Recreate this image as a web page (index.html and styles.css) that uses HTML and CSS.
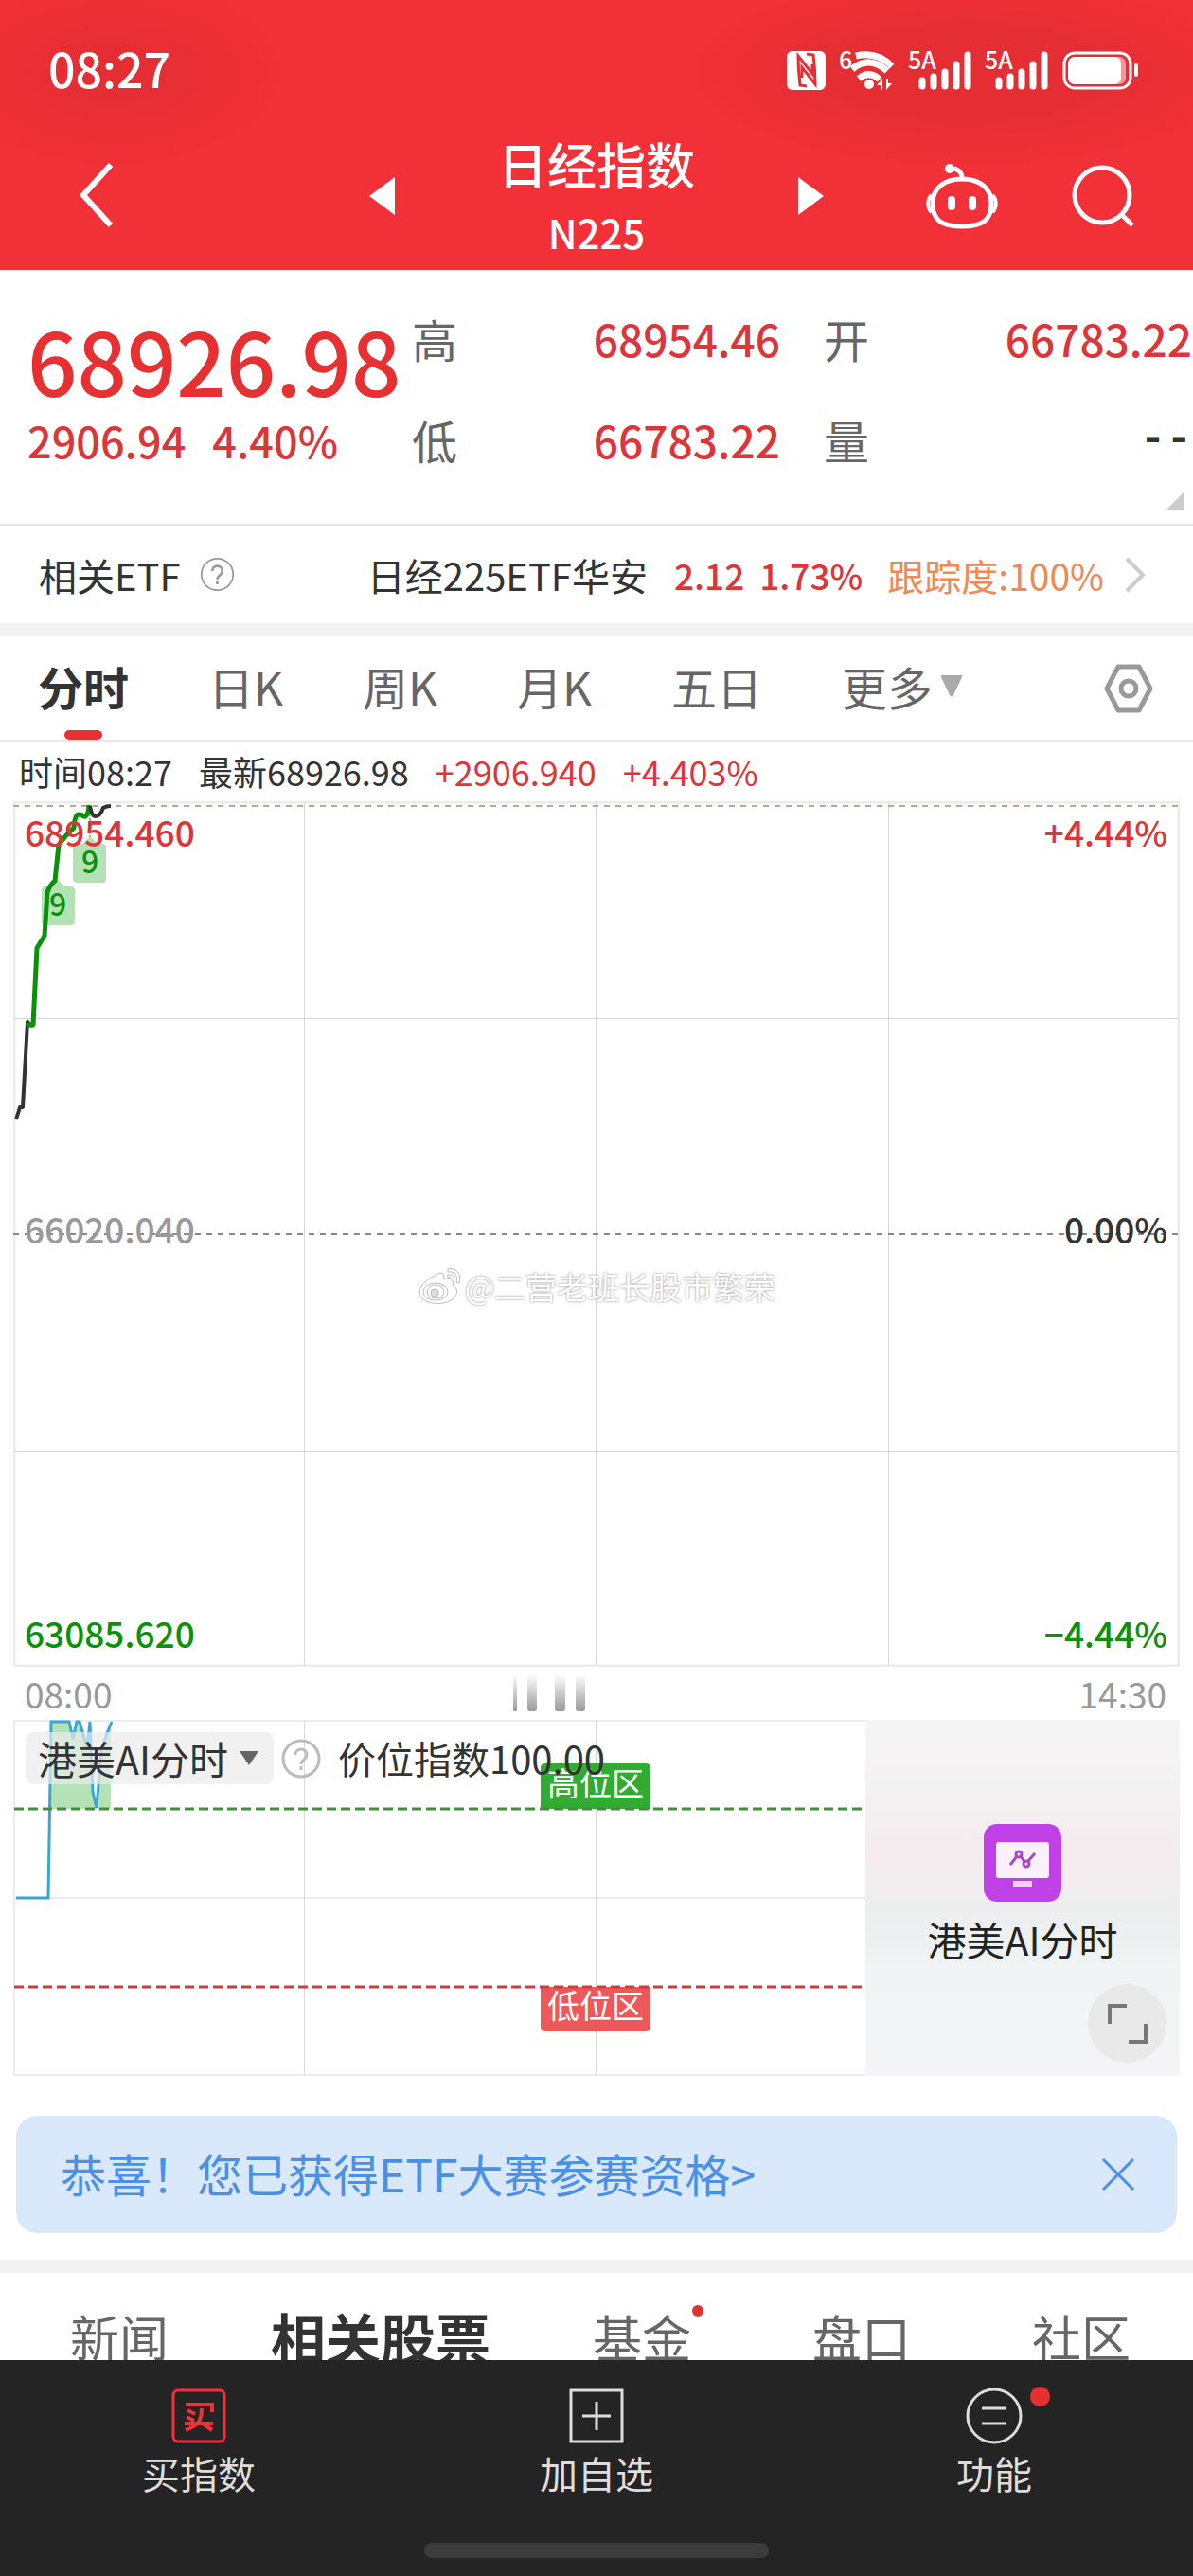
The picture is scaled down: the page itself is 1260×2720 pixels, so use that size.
FILE: index.html
```html
<!DOCTYPE html>
<html lang="zh-CN">
<head>
    <meta charset="UTF-8">
    <meta name="viewport" content="width=device-width, initial-scale=1.0">
    <title>日经指数 N225</title>
    <link rel="stylesheet" href="styles.css">
</head>
<body>
    <header class="header">
        <div class="status-bar">
            <span class="clock">08:27</span>
            <svg class="status-icons" width="372" height="42" viewBox="831 54 372 42" fill="#fff" aria-hidden="true">
                <!-- NFC -->
                <rect x="831" y="54" width="41" height="41" rx="6"/>
                <path d="M852 91l-7-1q-2-16-2-31l15 19V68M852 57l7 1q2 16 2 31l-14-18v11" fill="none" stroke="#e62e34" stroke-width="3"/>
                <!-- wifi -->
                <text x="886" y="73" class="status-text">6</text>
                <g fill="none" stroke="#fff" stroke-width="7">
                    <path d="M904 59q22-5 38 11"/>
                    <path d="M900 73q18-15 37 2"/>
                    <path d="M907 83q11-9 22 1"/>
                </g>
                <circle cx="918" cy="89" r="5"/>
                <path d="M926 90l6-7v12h-2v-5zM942 88l-6 7V83h2v5z"/>
                <!-- signal -->
                <text x="959" y="73" class="status-text">5A</text>
                <g stroke="#fff" stroke-width="7" stroke-linecap="round">
                    <path d="M974 85v6M986 81v10M998 76v15M1010 68v23M1022 58v33"/>
                    <path d="M1055 85v6M1067 81v10M1079 76v15M1091 68v23M1103 58v33"/>
                </g>
                <text x="1040" y="73" class="status-text">5A</text>
                <!-- battery -->
                <rect x="1124" y="56" width="70" height="37" rx="11" fill="none" stroke="#fff" stroke-width="3"/>
                <rect x="1129" y="60" width="60" height="29" rx="7" opacity=".5"/>
                <rect x="1128" y="60" width="56" height="29" rx="7"/>
                <rect x="1198" y="67" width="4" height="14" rx="2"/>
            </svg>
        </div>
        <div class="title-bar">
            <div class="title-left">
                <button class="icon-button" aria-label="返回">
                    <svg width="40" height="70" viewBox="0 0 40 70"><path d="M35 2L6 34l29 32" fill="none" stroke="#fff" stroke-width="6"/></svg>
                </button>
            </div>
            <div class="title-center">
                <button class="icon-button" aria-label="上一个">
                    <svg width="27" height="40" viewBox="0 0 27 40"><path d="M27 0v40L0 20z" fill="#fff"/></svg>
                </button>
                <div>
                    <h1>日经指数</h1>
                    <p class="code">N225</p>
                </div>
                <button class="icon-button" aria-label="下一个">
                    <svg width="27" height="40" viewBox="0 0 27 40"><path d="M0 0v40l27-20z" fill="#fff"/></svg>
                </button>
            </div>
            <div class="title-right">
                <button class="icon-button" aria-label="智能助手">
                    <svg width="76" height="70" viewBox="0 0 76 70" fill="none" stroke="#fff" stroke-width="5">
                        <path d="M38 17c17 0 31 8 31 26S59 67 38 67 7 61 7 43s14-26 31-26z"/>
                        <path d="M27 6c7 0 11 4 11 10"/>
                        <circle cx="25" cy="6" r="5" fill="#fff" stroke="none"/>
                        <path d="M6 34c-5 4-5 14 0 18M70 34c5 4 5 14 0 18" stroke-width="4"/>
                        <path d="M27 39v7M49 39v7" stroke-width="8" stroke-linecap="round"/>
                    </svg>
                </button>
                <button class="icon-button" aria-label="搜索">
                    <svg width="66" height="66" viewBox="0 0 66 66" fill="none" stroke="#fff" stroke-width="5">
                        <circle cx="32" cy="32" r="29"/>
                        <path d="M52 52l12 12"/>
                    </svg>
                </button>
            </div>
        </div>
    </header>

    <main>
        <section class="quote">
            <div class="quote-main">
                <div class="price">68926.98</div>
                <div class="change"><span>2906.94</span><span>4.40%</span></div>
            </div>
            <dl class="stats">
                <div><dt>高</dt><dd>68954.46</dd></div>
                <div><dt>低</dt><dd>66783.22</dd></div>
            </dl>
            <dl class="stats">
                <div><dt>开</dt><dd>66783.22</dd></div>
                <div><dt>量</dt><dd class="empty">--</dd></div>
            </dl>
            <svg class="corner" width="20" height="20" viewBox="0 0 20 20"><path d="M20 0v20H0z" fill="#ccc"/></svg>
        </section>

        <a class="etf-row" href="#etf">
            <span>相关ETF</span>
            <svg class="help" width="37" height="37" viewBox="0 0 42 42" fill="none" stroke="#999" stroke-width="2">
                <circle cx="21" cy="21" r="19"/>
                <path d="M15 17c0-8 12-8 12 0 0 5-6 5-6 10M21 29v4" stroke-width="3"/>
            </svg>
            <span class="etf-name">日经225ETF华安</span>
            <span class="etf-change red">2.12</span>
            <span class="etf-percent red">1.73%</span>
            <span class="tracking">跟踪度:100%</span>
            <svg class="chevron" width="22" height="38" viewBox="0 0 22 38"><path d="M2 2l17 17L2 36" fill="none" stroke="#ccc" stroke-width="4"/></svg>
        </a>

        <nav class="period-tabs">
            <button class="active">分时</button>
            <button>日K</button>
            <button>周K</button>
            <button>月K</button>
            <button>五日</button>
            <button class="more">更多<svg width="24" height="24" viewBox="0 0 24 24"><path d="M2 1h20q2 0 1 2l-9 19q-2 3-4 0L1 3q-1-2 1-2z" fill="#aaa"/></svg></button>
            <button class="settings" aria-label="设置">
                <svg width="52" height="52" viewBox="0 0 52 52" fill="none" stroke="#999" stroke-width="5" stroke-linejoin="round">
                    <path d="M15 3h22l12 23-12 23H15L3 26z"/>
                    <circle cx="26" cy="26" r="8"/>
                </svg>
            </button>
        </nav>

        <div class="info-row">
            <span>时间08:27</span>
            <span>最新68926.98</span>
            <span class="red">+2906.940</span>
            <span class="red">+4.403%</span>
        </div>

        <section class="chart">
            <svg viewBox="14 846 1232 914" fill="none">
                <path d="M15 847h1230v912H15z" stroke="#ececec" stroke-width="3"/>
                <path d="M321 847v912M629 847v912M938 847v912M15 1075h1230M15 1532h1230" stroke="#d8d8d8" shape-rendering="crispEdges"/>
                <path d="M14 851h1232" stroke="#b5ab86" stroke-width="2" stroke-dasharray="6 6"/>
                <path d="M14 1303h1232" stroke="#888" stroke-width="2" stroke-dasharray="6 6"/>
                <g fill="#b4e2b4">
                    <path d="M48 936h4l8-8 9 8h6q4 0 4 4v33q0 4-4 4H48q-4 0-4-4v-33q0-4 4-4z"/>
                    <path d="M81 891h6l8-8 8 8h5q4 0 4 4v33q0 4-4 4H81q-4 0-4-4v-33q0-4 4-4z"/>
                </g>
                <path d="M95 852v32" stroke="#0a910a" stroke-dasharray="4 2"/>
                <g stroke-width="4" stroke-linejoin="round">
                    <path d="M17 1182l4-13h3l5-90 3 3" stroke="#333"/>
                    <path d="M29 1080q1 3 6 2l4-81 8-13 3-46q3-8 8-12l4-38 8-10 8-8q1-14 5-14t5 2q5 2 6-12" stroke="#0a910a" stroke-width="5"/>
                    <path d="M95 851q2 11 5 11 6 0 9-9 3-2 8-2" stroke="#333"/>
                </g>
                <g class="marker-text">
                    <text x="61" y="967">9</text>
                    <text x="95" y="922">9</text>
                </g>
            </svg>
            <span class="axis-label top left red">68954.460</span>
            <span class="axis-label top right red">+4.44%</span>
            <span class="axis-label middle left gray">66020.040</span>
            <span class="axis-label middle right">0.00%</span>
            <span class="axis-label bottom left green">63085.620</span>
            <span class="axis-label bottom right green">−4.44%</span>
            <div class="watermark">
                <svg width="48" height="44" viewBox="0 0 48 44" fill="#fff" stroke="#bbb" stroke-width="1">
                    <path d="M18 11c6-5 12-3 9 4 8-3 13-1 10 6 6 3 6 9 1 14-9 9-36 7-36-7 0-6 8-13 16-17z"/>
                    <ellipse cx="19" cy="28" rx="13" ry="9"/>
                    <ellipse cx="19" cy="28" rx="9" ry="7"/>
                    <circle cx="18" cy="29" r="4" fill="#ddd"/>
                    <path d="M32 4c9-2 15 5 12 15l-3-1c2-8-2-12-9-11zM32 10c5-1 8 3 6 8l-2-1c1-3-1-5-4-4z"/>
                </svg>
                <span>@二营老班长股市繁荣</span>
            </div>
        </section>

        <div class="time-axis">
            <span>08:00</span>
            <svg class="bars" width="78" height="40" viewBox="0 0 78 40">
                <defs>
                    <linearGradient id="barFade" x1="0" y1="0" x2="0" y2="1">
                        <stop offset="0" stop-color="#fff"/>
                        <stop offset="1" stop-color="#999"/>
                    </linearGradient>
                </defs>
                <g fill="url(#barFade)">
                    <rect x="1" y="0" width="4" height="39" rx="1"/>
                    <rect x="16" y="0" width="10" height="39" rx="3"/>
                    <rect x="45" y="0" width="11" height="39" rx="3"/>
                    <rect x="67" y="0" width="10" height="39" rx="3"/>
                </g>
            </svg>
            <span class="end">14:30</span>
        </div>

        <section class="indicator">
            <div class="indicator-chart">
                <svg viewBox="14 1816 900 376" fill="none">
                    <path d="M914 1817H15v374h899M15 2004h899" stroke="#ececec" stroke-width="2"/>
                    <path d="M321 1817v374M629 1817v374" stroke="#d8d8d8" shape-rendering="crispEdges"/>
                    <path d="M53 1817h21l4 18 4-18h2l8 26 3-26 2 70 5 23H53zM104 1910l3-61 10-32v93z" fill="#b4e2b4"/>
                    <path d="M17 2004h34l3-186h19l4 18 4-18h3l8 27 3-27 3 74 4 17 5-61 6-18 5-12" stroke="#3ba5d8" stroke-width="3"/>
                    <path d="M571 1910v-43q0-5 5-5h106q5 0 5 5v43z" fill="#32ab32"/>
                    <path d="M571 2098v42q0 5 5 5h106q5 0 5-5v-42z" fill="#ef5858"/>
                    <path d="M15 1910h896" stroke="#3f9138" stroke-width="3" stroke-dasharray="10 5"/>
                    <path d="M15 2098h896" stroke="#d13a3e" stroke-width="3" stroke-dasharray="10 5"/>
                    <g class="zone-text">
                        <text x="629" y="1896">高位区</text>
                        <text x="629" y="2131">低位区</text>
                    </g>
                </svg>
                <div class="indicator-head">
                    <button class="indicator-select">港美AI分时<svg width="20" height="15" viewBox="0 0 20 15"><path d="M0 0h20L10 15z" fill="#666"/></svg></button>
                    <svg class="help" width="42" height="42" viewBox="0 0 42 42" fill="none" stroke="#bbb" stroke-width="3">
                        <circle cx="21" cy="21" r="19"/>
                        <path d="M15 17c0-8 12-8 12 0 0 5-6 5-6 10M21 29v4"/>
                    </svg>
                    <span>价位指数100.00</span>
                </div>
            </div>
            <aside class="indicator-panel">
                <svg width="82" height="82" viewBox="0 0 82 82">
                    <rect width="82" height="82" rx="14" fill="#bf41e7"/>
                    <rect x="13" y="19" width="56" height="38" rx="3" fill="#fbf0fd"/>
                    <rect x="31" y="60" width="20" height="6" fill="#f5cffc"/>
                    <g fill="none" stroke="#a948c4" stroke-width="3">
                        <path d="M28 43l7-9M39 34l4 6M47 39l7-8"/>
                        <circle cx="37" cy="32" r="3"/>
                        <circle cx="45" cy="42" r="3"/>
                    </g>
                </svg>
                <span>港美AI分时</span>
                <button class="expand" aria-label="展开">
                    <svg width="44" height="44" viewBox="0 0 44 44" fill="none" stroke="#777" stroke-width="4"><path d="M3 22V3h18M41 22v19H23"/></svg>
                </button>
            </aside>
        </section>

        <div class="banner">
            <a href="#contest">恭喜！您已获得ETF大赛参赛资格&gt;</a>
            <button class="icon-button" aria-label="关闭">
                <svg width="36" height="36" viewBox="0 0 36 36"><path d="M2 2l32 32M34 2L2 34" stroke="#4b90e2" stroke-width="3"/></svg>
            </button>
        </div>

        <nav class="content-tabs">
            <a href="#news">新闻</a>
            <a class="active" href="#stocks">相关股票</a>
            <a class="has-dot" href="#funds">基金</a>
            <a href="#book">盘口</a>
            <a href="#community">社区</a>
        </nav>
    </main>

    <footer class="bottom-bar">
        <nav>
            <button>
                <svg width="60" height="60" viewBox="0 0 60 60" fill="none" stroke="#f0303a" stroke-width="3">
                    <rect x="3" y="3" width="54" height="54" rx="5"/>
                    <path d="M16 18h28v8M18 24l8 4M17 31l8 4M15 38h30M33 22c0 14-4 18-17 23M34 38l10 7" stroke-width="4"/>
                </svg>
                买指数
            </button>
            <button>
                <svg width="60" height="60" viewBox="0 0 60 60" fill="none" stroke="#ddd" stroke-width="3">
                    <path d="M3 3h54v54H3zM30 15v30M15 30h30"/>
                </svg>
                加自选
            </button>
            <button>
                <span class="dot-icon">
                    <svg width="60" height="60" viewBox="0 0 60 60" fill="none" stroke="#ddd" stroke-width="3">
                        <circle cx="30" cy="30" r="28"/>
                        <path d="M17 22h26M17 38h26"/>
                    </svg>
                </span>
                功能
            </button>
        </nav>
        <div class="home-indicator"></div>
    </footer>
</body>
</html>
```

FILE: styles.css
```css
* {
    box-sizing: border-box;
}

body {
    margin: 0;
    background: #fff;
    color: #333;
    font-family: "Noto Sans CJK SC", sans-serif;
    font-size: 40px;
}

svg {
    display: block;
    flex-shrink: 0;
}

button {
    padding: 0;
    border: none;
    background: none;
    color: inherit;
    font: inherit;
    cursor: pointer;
}

a {
    color: inherit;
    text-decoration: none;
}

h1, p, dl, dd {
    margin: 0;
}

.red {
    color: #dc353a;
}

.green {
    color: #0a910a;
}

.gray {
    color: #999;
}

/* Header */
.header {
    background:
        radial-gradient(ellipse 180px 100px at 118px 76px, #e52e34 25%, transparent),
        radial-gradient(ellipse 290px 100px at calc(100% - 240px) 76px, #e52e34 50%, transparent),
        #f13037;
    color: #fff;
}

.status-bar {
    display: flex;
    justify-content: space-between;
    align-items: center;
    height: 129px;
    padding: 20px 57px 0 51px;
}

.status-icons {
    overflow: visible;
}

.clock {
    margin-bottom: 8px;
    font-size: 50px;
    font-weight: 500;
    line-height: 40px;
}

.status-text {
    font-size: 25px;
    font-weight: 500;
}

.title-bar {
    display: grid;
    grid-template-columns: 1fr 480px 1fr;
    align-items: center;
    height: 156px;
}

.title-left {
    display: flex;
    padding-left: 82px;
}

.title-center {
    display: flex;
    justify-content: space-between;
    align-items: center;
    text-align: center;
}

.title-center h1 {
    font-size: 52px;
    font-weight: 500;
    line-height: 76px;
}

.code {
    font-size: 42px;
    font-weight: 500;
    line-height: 68px;
}

.title-right {
    display: flex;
    justify-content: flex-end;
    align-items: center;
    gap: 78px;
    padding-right: 62px;
}

/* Quote */
.quote {
    position: relative;
    display: flex;
    gap: 46px;
    height: 270px;
    padding: 19px 1px 0 29px;
    border-bottom: 2px solid #e5e5e5;
}

.quote-main {
    width: 360px;
    padding-top: 25px;
    color: #e63031;
    white-space: nowrap;
}

.price {
    font-size: 92px;
    font-weight: 500;
    line-height: 100px;
}

.change {
    display: flex;
    gap: 28px;
    margin-top: 6px;
    color: #dc353a;
    font-size: 45px;
    font-weight: 500;
    line-height: 60px;
}

.stats {
    flex: 1;
    font-size: 48px;
    line-height: 107px;
}

.stats div {
    display: flex;
    justify-content: space-between;
}

.stats dt {
    color: #666;
}

.stats dd {
    color: #dc353a;
    font-size: 46px;
    font-weight: 500;
}

.stats .empty {
    color: #333;
    font-family: "Liberation Mono", monospace;
    font-weight: bold;
}

.corner {
    position: absolute;
    right: 9px;
    bottom: 14px;
}

/* Related ETF */
.etf-row {
    display: flex;
    align-items: center;
    height: 103px;
    padding: 0 50px 0 41px;
    white-space: nowrap;
}

.etf-row .help {
    margin-left: 20px;
}

.etf-name {
    margin-left: auto;
}

.etf-change {
    margin-left: 28px;
    font-size: 37px;
    font-weight: 500;
}

.etf-percent {
    margin-left: 16px;
    font-size: 37px;
    font-weight: 500;
}

.tracking {
    margin-left: 26px;
    color: #ee8a55;
    font-size: 39px;
}

.chevron {
    margin-left: 22px;
}

/* Period tabs */
.period-tabs {
    display: flex;
    align-items: center;
    gap: 84px;
    height: 125px;
    padding: 0 42px 0 40px;
    border-top: 14px solid #f3f3f3;
    border-bottom: 2px solid #e8e8e8;
    color: #666;
    font-size: 48px;
    white-space: nowrap;
}

.period-tabs button {
    height: 100%;
    padding-bottom: 6px;
}

.period-tabs .settings {
    margin-left: auto;
    padding: 0;
}

.period-tabs .active {
    position: relative;
    color: #333;
    font-weight: bold;
}

.period-tabs .active::after {
    content: "";
    position: absolute;
    left: calc(50% - 20px);
    bottom: 0;
    width: 40px;
    height: 10px;
    border-radius: 5px;
    background: #e63031;
}

.more {
    display: flex;
    align-items: center;
    gap: 8px;
}

.info-row {
    display: flex;
    gap: 28px;
    padding-left: 20px;
    font-size: 36px;
    line-height: 63px;
    white-space: nowrap;
}

/* Main chart */
.chart {
    position: relative;
    margin: 0 14px;
}

.chart > svg,
.indicator-chart > svg {
    width: 100%;
    height: auto;
}

.marker-text {
    fill: #0a910a;
    font-size: 32px;
    font-weight: 500;
    text-anchor: middle;
}

.axis-label {
    position: absolute;
    font-size: 37px;
    font-weight: 500;
    line-height: 40px;
}

.axis-label.left {
    left: 12px;
}

.axis-label.right {
    right: 13px;
}

.axis-label.top {
    top: 12px;
}

.axis-label.middle {
    top: calc(50% - 26px);
}

.axis-label.bottom {
    bottom: 16px;
}

.watermark {
    position: absolute;
    top: calc(50% + 33px);
    left: 0;
    right: 0;
    display: flex;
    justify-content: center;
    align-items: center;
    gap: 2px;
    color: #fff;
    font-size: 33px;
    line-height: 44px;
    text-shadow: 0 0 3px #aaa, 0 0 2px #bbb;
}

.time-axis {
    display: flex;
    align-items: center;
    height: 56px;
    padding: 0 28px 0 26px;
    color: #999;
    font-size: 37px;
    line-height: 52px;
}

.bars {
    margin-left: 35%;
}

.time-axis .end {
    margin-left: auto;
}

/* Indicator chart */
.indicator {
    display: flex;
    margin: 0 14px;
}

.indicator-chart {
    position: relative;
    flex: 1;
}

.zone-text {
    fill: #fff;
    font-size: 34px;
    text-anchor: middle;
}

.indicator-head {
    position: absolute;
    top: 13px;
    left: 13px;
    display: flex;
    align-items: center;
    line-height: 55px;
    white-space: nowrap;
}

.indicator-select {
    display: flex;
    align-items: center;
    gap: 12px;
    padding: 0 16px 0 13px;
    border-radius: 8px;
    background: rgba(235, 235, 235, 0.7);
    font-size: 41px;
}

.indicator-head .help {
    margin: 0 18px 0 8px;
}

.indicator-panel {
    position: relative;
    display: flex;
    flex-direction: column;
    align-items: center;
    width: 332px;
    padding-top: 110px;
    background: linear-gradient(#f5f5f6, #f4ecee 40%, #eceeef 55%, #f0f4f5 70%, #f5f4f7);
    color: #222;
    font-size: 41px;
}

.indicator-panel span {
    margin-top: 9px;
    line-height: 60px;
}

.expand {
    position: absolute;
    right: 14px;
    bottom: 14px;
    display: grid;
    place-items: center;
    width: 83px;
    height: 83px;
    border-radius: 50%;
    background: #e9e9e9;
}

/* Banner */
.banner {
    display: flex;
    justify-content: space-between;
    align-items: center;
    height: 124px;
    margin: 42px 17px 28px;
    padding: 0 44px 0 47px;
    border-radius: 22px;
    background: #d9e8fb;
    color: #4b90e2;
    font-size: 48px;
}

.banner a {
    padding-bottom: 5px;
}

/* Content tabs */
.content-tabs {
    display: flex;
    justify-content: space-between;
    padding: 0 66px 0 74px;
    border-top: 14px solid #f3f3f3;
    color: #666;
    font-size: 52px;
    line-height: 134px;
    white-space: nowrap;
}

.content-tabs .active {
    margin: 0 -20px;
    color: #333;
    font-size: 58px;
    font-weight: bold;
}

.has-dot,
.dot-icon {
    position: relative;
}

.has-dot::after,
.dot-icon::after {
    content: "";
    position: absolute;
    top: 34px;
    right: -13px;
    width: 12px;
    height: 12px;
    border-radius: 50%;
    background: #e63031;
}

.dot-icon::after {
    top: -1px;
    right: -29px;
    width: 21px;
    height: 21px;
}

/* Bottom bar */
.bottom-bar {
    position: fixed;
    left: 0;
    right: 0;
    bottom: 0;
    padding: 29px 0 19px;
    background: #242424;
    color: #ddd;
}

.bottom-bar nav {
    display: grid;
    grid-template-columns: repeat(3, 1fr);
}

.bottom-bar button {
    display: flex;
    flex-direction: column;
    align-items: center;
    line-height: 60px;
}

.home-indicator {
    width: 364px;
    height: 16px;
    margin: 44px auto 0;
    border-radius: 8px;
    background: #3c3c3c;
}
```
